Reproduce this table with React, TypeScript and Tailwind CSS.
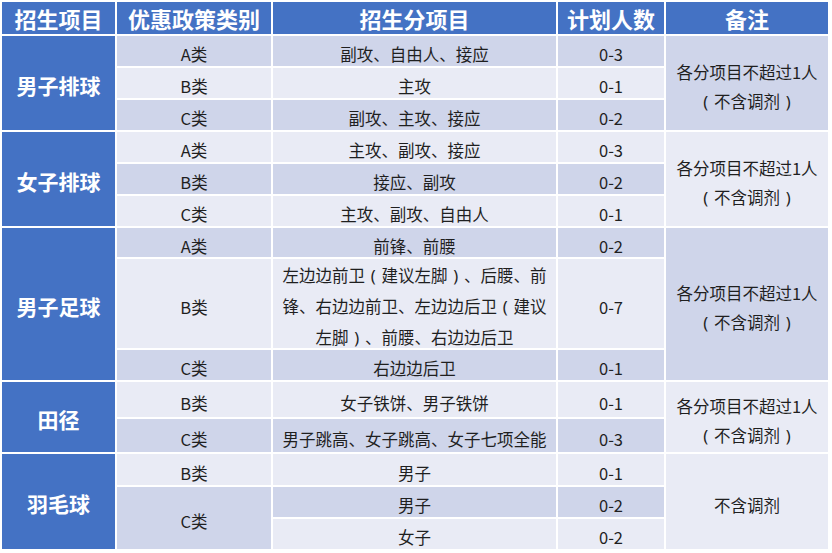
import React from "react";

const D = "bg-[#CFD5EA]";
const L = "bg-[#E9EBF5]";
const cellBase = "flex items-center justify-center text-center text-[16.5px] text-[#1f1f1f] leading-[30px] pt-[6px]";
const headCell = "flex items-center justify-center bg-[#4472C4] text-white font-bold text-[22px]";
const firstCol = "flex items-center justify-center bg-[#4472C4] text-white font-bold text-[21px] pt-[5px]";

function C({ bg, children, span }: { bg: string; children: React.ReactNode; span?: string }) {
  return <div className={`${cellBase} ${bg} ${span ?? ""}`}>{children}</div>;
}

function LP() {
  return <span className="inline-block w-[1em] text-center" style={{ fontFamily: '"Noto Sans", sans-serif' }}>(</span>;
}
function RP() {
  return <span className="inline-block w-[1em] text-center" style={{ fontFamily: '"Noto Sans", sans-serif' }}>)</span>;
}

const remark = (
  <div className="flex flex-col items-center leading-[29px] pt-[2px]">
    <span>各分项目不超过1人</span>
    <span>
      <LP />不含调剂<RP />
    </span>
  </div>
);

export default function App() {
  return (
    <div
      className="w-[832px] h-[553px] bg-white p-[2px]"
      style={{ fontFamily: '"Noto Sans CJK SC", "Noto Sans", sans-serif' }}
    >
      <div className="grid grid-cols-[113px_154px_283px_106px_162px] grid-rows-[32px_30px_30px_30px_30px_30px_30px_29px_89px_30px_35px_33px_31px_30px_30px] gap-[2px] bg-white">
        <div className={headCell}>招生项目</div>
        <div className={headCell}>优惠政策类别</div>
        <div className={headCell}>招生分项目</div>
        <div className={headCell}>计划人数</div>
        <div className={headCell}>备注</div>

        {/* 男子排球 */}
        <div className={`${firstCol} row-span-3`}>男子排球</div>
        <C bg={D}>A类</C>
        <C bg={D}>副攻、自由人、接应</C>
        <C bg={D}>0-3</C>
        <C bg={D} span="row-span-3">{remark}</C>
        <C bg={L}>B类</C>
        <C bg={L}>主攻</C>
        <C bg={L}>0-1</C>
        <C bg={D}>C类</C>
        <C bg={D}>副攻、主攻、接应</C>
        <C bg={D}>0-2</C>

        {/* 女子排球 */}
        <div className={`${firstCol} row-span-3`}>女子排球</div>
        <C bg={L}>A类</C>
        <C bg={L}>主攻、副攻、接应</C>
        <C bg={L}>0-3</C>
        <C bg={L} span="row-span-3">{remark}</C>
        <C bg={D}>B类</C>
        <C bg={D}>接应、副攻</C>
        <C bg={D}>0-2</C>
        <C bg={L}>C类</C>
        <C bg={L}>主攻、副攻、自由人</C>
        <C bg={L}>0-1</C>

        {/* 男子足球 */}
        <div className={`${firstCol} row-span-3`}>男子足球</div>
        <C bg={D}>A类</C>
        <C bg={D}>前锋、前腰</C>
        <C bg={D}>0-2</C>
        <C bg={D} span="row-span-3">{remark}</C>
        <C bg={L}>B类</C>
        <C bg={L}>
          <div className="leading-[30px]">
            左边边前卫<LP />建议左脚<RP />、后腰、前
            <br />
            锋、右边边前卫、左边边后卫<LP />建议
            <br />
            左脚<RP />、前腰、右边边后卫
          </div>
        </C>
        <C bg={L}>0-7</C>
        <C bg={D}>C类</C>
        <C bg={D}>右边边后卫</C>
        <C bg={D}>0-1</C>

        {/* 田径 */}
        <div className={`${firstCol} row-span-2`}>田径</div>
        <C bg={L}>B类</C>
        <C bg={L}>女子铁饼、男子铁饼</C>
        <C bg={L}>0-1</C>
        <C bg={L} span="row-span-2">{remark}</C>
        <C bg={D}>C类</C>
        <C bg={D}>男子跳高、女子跳高、女子七项全能</C>
        <C bg={D}>0-3</C>

        {/* 羽毛球 */}
        <div className={`${firstCol} row-span-3`}>羽毛球</div>
        <C bg={L}>B类</C>
        <C bg={L}>男子</C>
        <C bg={L}>0-1</C>
        <C bg={L} span="row-span-3">不含调剂</C>
        <C bg={D} span="row-span-2">C类</C>
        <C bg={D}>男子</C>
        <C bg={D}>0-2</C>
        <C bg={L}>女子</C>
        <C bg={L}>0-2</C>
      </div>
    </div>
  );
}
